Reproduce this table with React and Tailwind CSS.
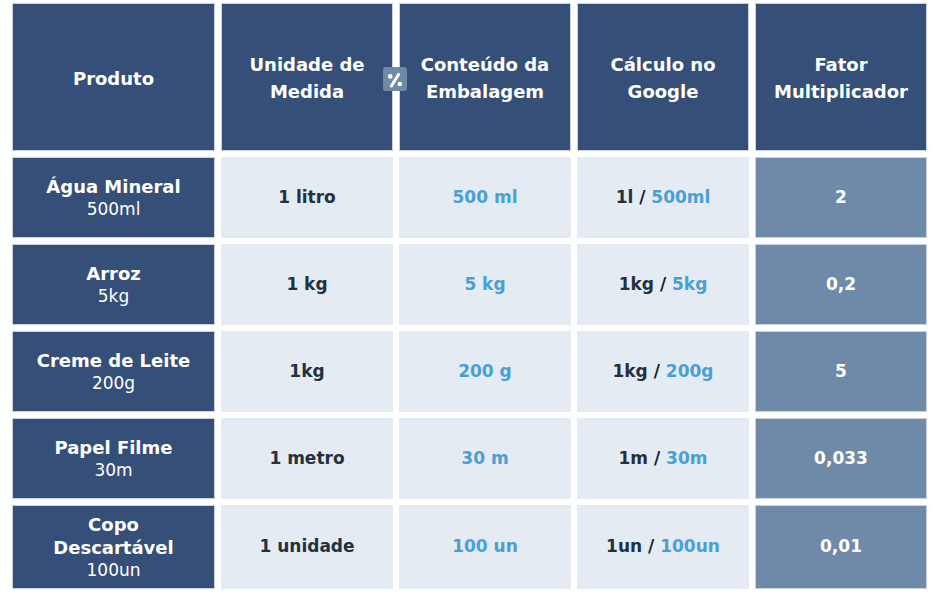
import React from "react";

const rows = [
  { name: ["Água Mineral"], size: "500ml", unit: "1 litro", pack: "500 ml", calcA: "1l", calcB: "500ml", factor: "2" },
  { name: ["Arroz"], size: "5kg", unit: "1 kg", pack: "5 kg", calcA: "1kg", calcB: "5kg", factor: "0,2" },
  { name: ["Creme de Leite"], size: "200g", unit: "1kg", pack: "200 g", calcA: "1kg", calcB: "200g", factor: "5" },
  { name: ["Papel Filme"], size: "30m", unit: "1 metro", pack: "30 m", calcA: "1m", calcB: "30m", factor: "0,033" },
  { name: ["Copo", "Descartável"], size: "100un", unit: "1 unidade", pack: "100 un", calcA: "1un", calcB: "100un", factor: "0,01" },
];

const cell = "flex flex-col items-center justify-center text-center border";

function PercentBadge() {
  return (
    <span className="absolute left-[371px] top-[64px] w-[24px] h-[24px] rounded-[3px] bg-[#7089a8] flex items-center justify-center">
      <svg width="24" height="24" viewBox="0 0 24 24" fill="none">
        <circle cx="7.2" cy="9.4" r="2.3" fill="#fff" />
        <circle cx="16.8" cy="17" r="2.3" fill="#fff" />
        <path d="M15.6 7.4 L8.4 19" stroke="#fff" strokeWidth="3" strokeLinecap="round" />
      </svg>
    </span>
  );
}

export default function App() {
  return (
    <div
      className="w-[940px] h-[601px] bg-white pl-[12px] pt-[3px]"
      style={{ fontFamily: '"DejaVu Sans", "Liberation Sans", sans-serif' }}
    >
      <div className="relative grid grid-cols-[203px_172px_172px_172px_172px] grid-rows-[148px_81px_81px_81px_81px_84px] gap-[6px] w-[915px]">
        {/* header */}
        {[["Produto"], ["Unidade de", "Medida"], ["Conteúdo da", "Embalagem"], ["Cálculo no", "Google"], ["Fator", "Multiplicador"]].map((h, i) => (
          <div key={i} className={`${cell} border-[#c9d2de] bg-[#354f78] text-white font-bold text-[18px] leading-[27px] pt-[2px]`}>
            {h.map((line) => (
              <span key={line}>{line}</span>
            ))}
          </div>
        ))}

        {rows.map((r) => (
          <React.Fragment key={r.size}>
            <div className={`${cell} border-[#c9d2de] bg-[#354f78] text-white text-[18px] leading-[23px]`}>
              {r.name.map((n) => (
                <span key={n} className="font-bold">{n}</span>
              ))}
              <span className="font-normal text-[17px]">{r.size}</span>
            </div>
            <div className={`${cell} border-[#e4ebf2] bg-[#e4ebf2] text-[#22313e] font-bold text-[17px]`}>{r.unit}</div>
            <div className={`${cell} border-[#e4ebf2] bg-[#e4ebf2] text-[#4a9fd6] font-bold text-[17px]`}>{r.pack}</div>
            <div className={`${cell} border-[#e4ebf2] bg-[#e4ebf2] font-bold text-[17px]`}>
              <span>
                <span className="text-[#22313e]">{r.calcA}</span>
                <span className="text-[#0e1c30]"> / </span>
                <span className="text-[#4a9fd6]">{r.calcB}</span>
              </span>
            </div>
            <div className={`${cell} border-[#c9d2de] bg-[#6f8aa8] text-white font-bold text-[17px]`}>{r.factor}</div>
          </React.Fragment>
        ))}

        <PercentBadge />
      </div>
    </div>
  );
}
